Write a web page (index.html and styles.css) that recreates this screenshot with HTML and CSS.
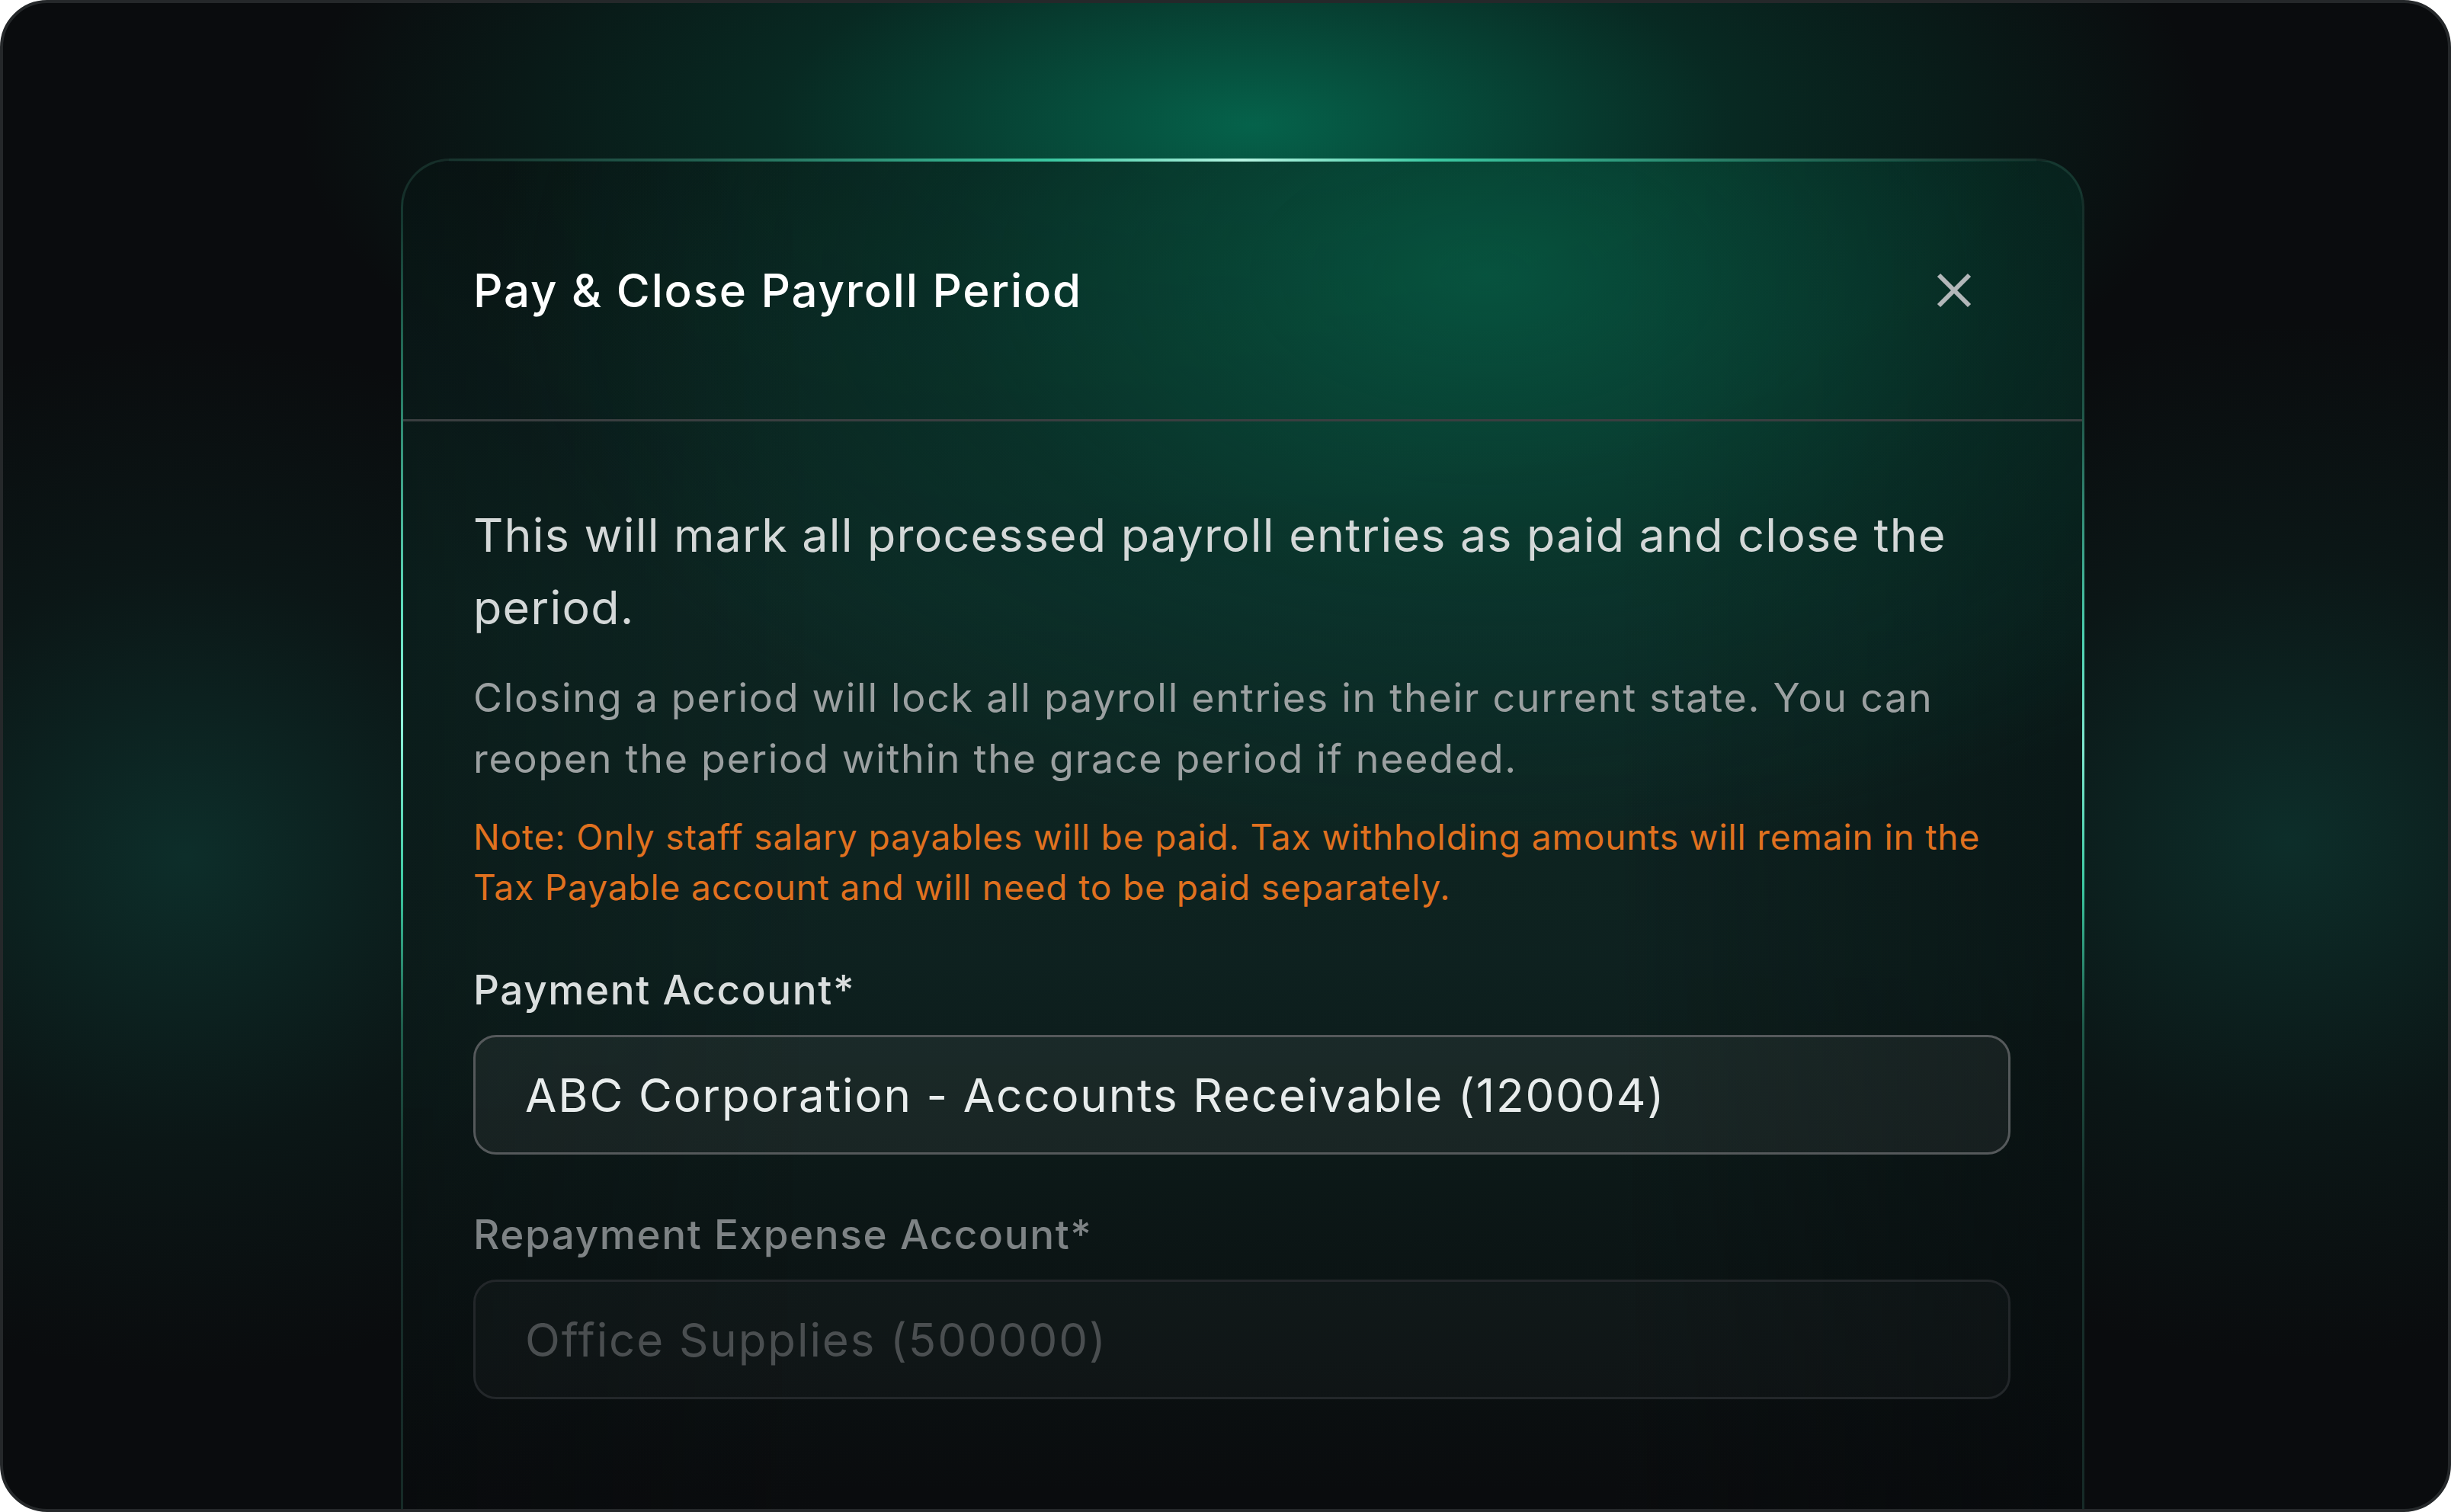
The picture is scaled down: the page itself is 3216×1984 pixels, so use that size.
FILE: index.html
```html
<!DOCTYPE html>
<html lang="en">
<head>
<meta charset="utf-8">
<title>Pay &amp; Close Payroll Period</title>
<link rel="stylesheet" href="styles.css">
</head>
<body>
<div class="frame">
  <div class="modal">
    <div class="modal-header">
      <h2 class="modal-title">Pay &amp; Close Payroll Period</h2>
      <button class="close-btn" aria-label="Close">
        <svg width="46" height="46" viewBox="0 0 46 46"><path d="M3 3 L43 43 M43 3 L3 43" stroke="#b3b7b9" stroke-width="6" fill="none"/></svg>
      </button>
    </div>
    <div class="modal-body">
      <p class="lead">This will mark all processed payroll entries as paid and close the period.</p>
      <p class="hint">Closing a period will lock all payroll entries in their current state. You can reopen the period within the grace period if needed.</p>
      <p class="note">Note: Only staff salary payables will be paid. Tax withholding amounts will remain in the Tax Payable account and will need to be paid separately.</p>
      <div class="field">
        <label class="field-label">Payment Account*</label>
        <div class="select">ABC Corporation - Accounts Receivable (120004)</div>
      </div>
      <div class="field field-faded">
        <label class="field-label">Repayment Expense Account*</label>
        <div class="select">Office Supplies (500000)</div>
      </div>
    </div>
  </div>
</div>
</body>
</html>
```

FILE: styles.css
```css
html, body {
  margin: 0;
  padding: 0;
  background: #ffffff;
}

.frame {
  width: 3216px;
  height: 1984px;
  box-sizing: border-box;
  border: 4px solid #25282a;
  border-radius: 62px;
  overflow: hidden;
  display: flex;
  align-items: flex-start;
  padding: 204px 0 0 522px;
  font-family: Inter, "Noto Sans", sans-serif;
  background:
    radial-gradient(ellipse 1250px 520px at 1640px 160px, rgba(4, 120, 90, 0.8), rgba(4, 96, 72, 0.35) 50%, rgba(4, 60, 50, 0) 100%),
    radial-gradient(ellipse 760px 680px at 240px 1120px, rgba(16, 80, 70, 0.5), rgba(16, 70, 60, 0.18) 55%, rgba(14, 60, 52, 0) 100%),
    radial-gradient(ellipse 760px 680px at 3000px 1100px, rgba(16, 80, 70, 0.5), rgba(16, 70, 60, 0.18) 55%, rgba(14, 60, 52, 0) 100%),
    #0a0c0e;
}

.modal {
  position: relative;
  width: 2209px;
  height: 1900px;
  flex: none;
  box-sizing: border-box;
  border: 3px solid rgba(40, 82, 72, 0.45);
  border-bottom: none;
  border-radius: 64px 64px 0 0;
  background:
    radial-gradient(ellipse 1300px 760px at 1420px 150px, rgba(5, 112, 82, 0.65), rgba(5, 86, 66, 0.3) 55%, rgba(5, 60, 50, 0) 100%),
    linear-gradient(90deg, rgba(6, 10, 12, 0.3) 0%, rgba(6, 10, 12, 0) 25%, rgba(6, 10, 12, 0) 72%, rgba(6, 10, 12, 0.5) 100%),
    linear-gradient(180deg, rgba(10, 24, 22, 0.9) 0%, rgba(14, 40, 36, 0.9) 30%, rgba(15, 36, 33, 0.92) 55%, rgba(12, 22, 22, 0.95) 76%, #0a0c0e 92%);
}

.modal::before {
  content: "";
  position: absolute;
  top: -3px;
  left: 60px;
  right: 60px;
  height: 4px;
  background: linear-gradient(90deg, rgba(60, 200, 160, 0.05) 0%, rgba(60, 200, 160, 0.35) 16%, #3cc9a2 38%, #b6f4e2 50%, #3cc9a2 62%, rgba(60, 200, 160, 0.4) 85%, rgba(60, 200, 160, 0.05) 100%);
}

.modal::after {
  content: "";
  position: absolute;
  top: 80px;
  bottom: 0;
  left: -3px;
  right: -3px;
  pointer-events: none;
  background:
    linear-gradient(180deg, rgba(60, 200, 160, 0) 0%, rgba(60, 200, 160, 0.45) 12%, #5fdcbc 28%, #8ff0d8 36%, #3cc9a2 48%, rgba(40, 150, 115, 0.45) 58%, rgba(40, 140, 110, 0) 70%) left top / 3px 100% no-repeat,
    linear-gradient(180deg, rgba(60, 200, 160, 0) 0%, rgba(60, 200, 160, 0.25) 14%, #4cd0b0 30%, #7fe8cf 38%, #3cc9a2 48%, rgba(40, 150, 115, 0.4) 58%, rgba(40, 140, 110, 0) 70%) right top / 3px 100% no-repeat;
}

.modal-header {
  height: 342px;
  box-sizing: border-box;
  display: flex;
  align-items: center;
  justify-content: space-between;
  padding: 0 145px 0 92px;
  border-bottom: 3px solid #3a3e40;
}

.modal-title {
  margin: 0;
  font-size: 60px;
  font-weight: 500;
  color: #ffffff;
  letter-spacing: 1.8px;
}

.close-btn {
  background: none;
  border: none;
  padding: 0;
  width: 46px;
  height: 46px;
  display: flex;
}

.modal-body {
  padding: 102px 94px 0 92px;
  display: flex;
  flex-direction: column;
}

.lead {
  margin: 0;
  font-size: 61px;
  line-height: 95px;
  color: #d4d8d8;
  letter-spacing: 1.2px;
}

.hint {
  margin: 31px 0 0;
  font-size: 52px;
  line-height: 80px;
  color: #9ba0a1;
  letter-spacing: 1.7px;
}

.note {
  margin: 29px 0 0;
  font-size: 46px;
  line-height: 66px;
  color: #e0711f;
  letter-spacing: 0.9px;
}

.field {
  display: flex;
  flex-direction: column;
  gap: 24px;
  margin-top: 67px;
}

.field + .field {
  margin-top: 70px;
}

.field-label {
  font-size: 53px;
  line-height: 70px;
  font-weight: 500;
  color: #dadede;
  letter-spacing: 1.6px;
}

.select {
  height: 157px;
  box-sizing: border-box;
  border: 3px solid #55595b;
  border-radius: 30px;
  background: rgba(255, 255, 255, 0.055);
  display: flex;
  align-items: center;
  padding: 0 65px;
  font-size: 60px;
  color: #e8ecec;
  letter-spacing: 1.9px;
}

.field-faded .field-label {
  color: #7e8385;
}

.field-faded .select {
  border-color: #23272a;
  background: rgba(255, 255, 255, 0.025);
  color: #4a4e50;
}
```
